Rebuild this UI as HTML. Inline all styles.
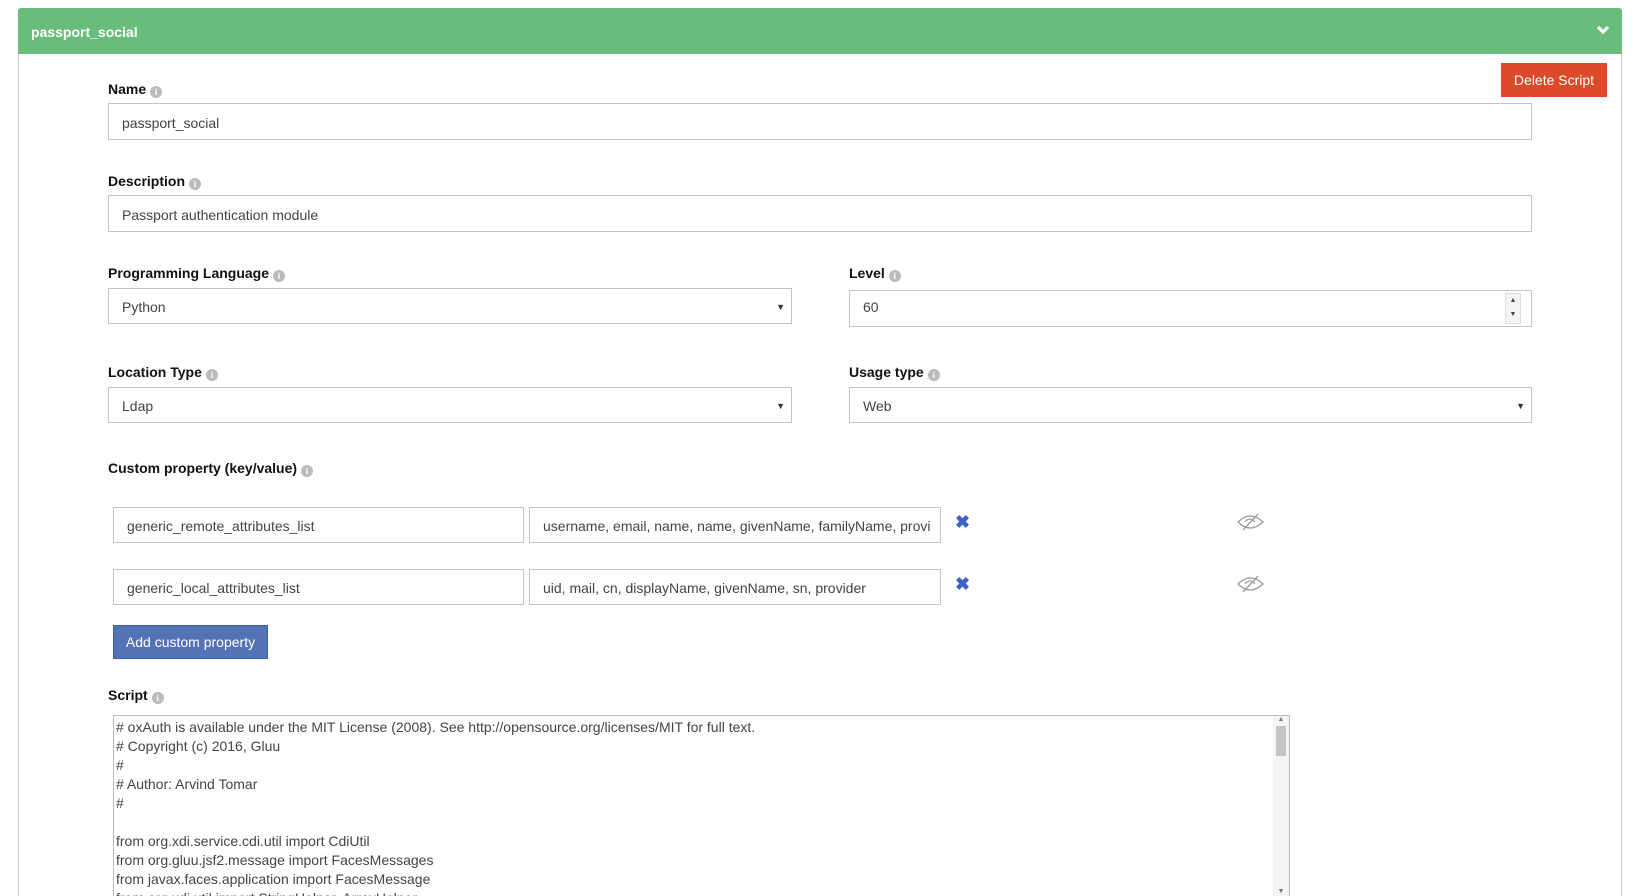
<!DOCTYPE html>
<html><head><style>
*{box-sizing:border-box;margin:0;padding:0}
html,body{width:1638px;height:896px;overflow:hidden}
body{background:#fff;font-family:"Liberation Sans",sans-serif;color:#333;position:relative}
.panel{position:absolute;left:18px;top:8px;width:1604px;height:888px;border:1px solid #c9c9c9;border-bottom:none;border-radius:3px 3px 0 0}
.hdr{position:absolute;left:18px;top:8px;width:1604px;height:46px;background:#69bd7b;border-radius:3px 3px 0 0;color:#fff;font-weight:bold;font-size:14px;padding:16px 0 0 13px}
.chev{position:absolute;right:12px;top:17px}
.lbl{position:absolute;font-weight:bold;font-size:14px;color:#111}
.i{display:inline-block;width:12px;height:12px;border-radius:50%;background:#bbb;color:#fff;font-size:9px;text-align:center;line-height:12px;vertical-align:-1px;margin-left:4px;font-family:"Liberation Serif",serif;font-weight:bold}
.inp{position:absolute;border:1px solid #c4c4c4;font-size:14px;color:#444;padding:2px 0 0 13px;display:flex;align-items:center;background:#fff;overflow:hidden;white-space:nowrap}
.arr{position:absolute;right:6px;font-size:9px;color:#333}
.btn{position:absolute;color:#fff;font-size:14px;display:flex;align-items:center;justify-content:center}
.x{position:absolute;color:#3d63c9;font-size:18px;font-weight:bold}
pre{font-family:"Liberation Sans",sans-serif;font-size:14px;line-height:19px;color:#444}
</style></head><body>
<div class="panel"></div>
<div class="hdr">passport_social
<svg class="chev" width="14" height="10" viewBox="0 0 14 10"><path d="M2 2 L7 7 L12 2" stroke="#fff" stroke-width="3.2" fill="none"/></svg></div>
<div class="btn" style="left:1501px;top:63px;width:106px;height:34px;background:#dd4a2a">Delete Script</div>

<div class="lbl" style="left:108px;top:81px">Name<span class="i">i</span></div>
<div class="inp" style="left:108px;top:103px;width:1424px;height:37px">passport_social</div>

<div class="lbl" style="left:108px;top:173px">Description<span class="i">i</span></div>
<div class="inp" style="left:108px;top:195px;width:1424px;height:37px">Passport authentication module</div>

<div class="lbl" style="left:108px;top:265px">Programming Language<span class="i">i</span></div>
<div class="inp" style="left:108px;top:288px;width:684px;height:36px">Python<span class="arr">▼</span></div>
<div class="lbl" style="left:849px;top:265px">Level<span class="i">i</span></div>
<div class="inp" style="left:849px;top:290px;width:683px;height:37px;align-items:flex-start;padding-top:8px">60
<div style="position:absolute;right:10px;top:2px;width:16px;height:31px;border:1px solid #ddd;background:#f4f4f4;font-size:7px;text-align:center;line-height:14px;padding:0">▲<br>▼</div></div>

<div class="lbl" style="left:108px;top:364px">Location Type<span class="i">i</span></div>
<div class="inp" style="left:108px;top:387px;width:684px;height:36px">Ldap<span class="arr">▼</span></div>
<div class="lbl" style="left:849px;top:364px">Usage type<span class="i">i</span></div>
<div class="inp" style="left:849px;top:387px;width:683px;height:36px">Web<span class="arr">▼</span></div>

<div class="lbl" style="left:108px;top:460px">Custom property (key/value)<span class="i">i</span></div>

<div class="inp" style="left:113px;top:507px;width:411px;height:36px">generic_remote_attributes_list</div>
<div class="inp" style="left:529px;top:507px;width:412px;height:36px">username, email, name, name, givenName, familyName, provi</div>
<div class="x" style="left:955px;top:512px">✖</div>
<svg style="position:absolute;left:1237px;top:513px" width="27" height="18" viewBox="0 0 27 18"><path d="M1 9 Q13 -3 26 9 Q13 21 1 9Z" fill="none" stroke="#999" stroke-width="1.3"/><path d="M8 9 Q13 3 18 9" fill="none" stroke="#999" stroke-width="1.3"/><path d="M6 17 L21 1" stroke="#999" stroke-width="1.3"/></svg>

<div class="inp" style="left:113px;top:569px;width:411px;height:36px">generic_local_attributes_list</div>
<div class="inp" style="left:529px;top:569px;width:412px;height:36px">uid, mail, cn, displayName, givenName, sn, provider</div>
<div class="x" style="left:955px;top:574px">✖</div>
<svg style="position:absolute;left:1237px;top:575px" width="27" height="18" viewBox="0 0 27 18"><path d="M1 9 Q13 -3 26 9 Q13 21 1 9Z" fill="none" stroke="#999" stroke-width="1.3"/><path d="M8 9 Q13 3 18 9" fill="none" stroke="#999" stroke-width="1.3"/><path d="M6 17 L21 1" stroke="#999" stroke-width="1.3"/></svg>

<div class="btn" style="left:113px;top:625px;width:155px;height:34px;background:#5473b6;border:1px solid #3f5ea3">Add custom property</div>

<div class="lbl" style="left:108px;top:687px">Script<span class="i">i</span></div>
<div style="position:absolute;left:113px;top:715px;width:1177px;height:181px;border:1px solid #bbb;border-bottom:none;padding:2px 0 0 2px;overflow:hidden">
<pre># oxAuth is available under the MIT License (2008). See http://opensource.org/licenses/MIT for full text.
# Copyright (c) 2016, Gluu
#
# Author: Arvind Tomar
#

from org.xdi.service.cdi.util import CdiUtil
from org.gluu.jsf2.message import FacesMessages
from javax.faces.application import FacesMessage
from org.xdi.util import StringHelper, ArrayHelper</pre>
<div style="position:absolute;right:0;top:0;width:16px;height:181px;background:#f4f4f4"><div style="font-size:7px;color:#777;text-align:center">▲</div><div style="margin:3px 3px 0;height:30px;background:#c4c4c4"></div><div style="position:absolute;bottom:2px;width:16px;font-size:7px;color:#777;text-align:center">▼</div></div>
</div>
</body></html>
